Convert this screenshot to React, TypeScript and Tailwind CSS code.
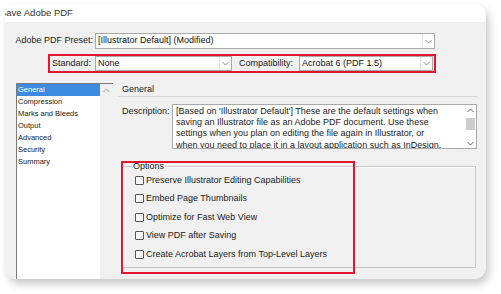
import React from "react";

const font = { fontFamily: '"Liberation Sans", Arial, sans-serif' };

function Chevron() {
  return (
    <svg width="7" height="5" viewBox="0 0 7 5">
      <polyline points="0.5,1 3.5,4 6.5,1" fill="none" stroke="#8a8a8a" strokeWidth="1" />
    </svg>
  );
}

function Select({ value, w }: { value: string; w: string }) {
  return (
    <div className={`${w} h-full flex bg-white border border-[#a9a9a9]`}>
      <div className="flex-1 flex items-center pl-[2px] text-[9px] text-[#111] whitespace-nowrap overflow-hidden">{value}</div>
      <div className="w-[12px] border-l border-[#e3e3e3] flex items-center justify-center">
        <Chevron />
      </div>
    </div>
  );
}

function Check({ label }: { label: string }) {
  return (
    <div className="h-[18.5px] flex items-center">
      <div className="w-[9px] h-[9px] border border-[#555] bg-[#f7f7f7] rounded-[1px]" />
      <span className="ml-[2px] text-[9px] text-[#1a1a1a] whitespace-nowrap">{label}</span>
    </div>
  );
}

export default function App() {
  const items = ["General", "Compression", "Marks and Bleeds", "Output", "Advanced", "Security", "Summary"];
  const desc = [
    "[Based on 'Illustrator Default'] These are the default settings when",
    "saving an Illustrator file as an Adobe PDF document. Use these",
    "settings when you plan on editing the file again in Illustrator, or",
    "when you need to place it in a layout application such as InDesign.",
  ];
  return (
    <div className="w-[501px] h-[294px] bg-white overflow-hidden pt-[4px] pl-[5px]" style={font}>
      <div className="w-[481px] h-[275px] rounded-[12px] overflow-hidden flex flex-col bg-white shadow-[3px_5px_9px_rgba(0,0,0,0.22)]">
        <div className="h-[18px] flex items-center bg-white shrink-0">
          <span className="ml-[-5px] text-[9.5px] text-[#333] whitespace-nowrap">Save Adobe PDF</span>
        </div>
        <div className="flex-1 bg-[#f0f0f0] flex flex-col">
          {/* Preset row */}
          <div className="mt-[11px] h-[16px] flex items-stretch">
            <div className="w-[90px] flex items-center justify-end pr-[2px] text-[9px] text-[#1a1a1a] whitespace-nowrap">Adobe PDF Preset:</div>
            <Select value="[Illustrator Default] (Modified)" w="w-[340px]" />
          </div>
          {/* Standard row */}
          <div className="mt-[5px] ml-[43px] w-[388px] h-[19px] border-2 border-[#e3162f] flex items-stretch">
            <div className="w-[45px] flex items-center pl-[2px] text-[9px] text-[#1a1a1a]">Standard:</div>
            <Select value="None" w="w-[137px]" />
            <div className="w-[67px] flex items-center pl-[7px] text-[9px] text-[#1a1a1a] whitespace-nowrap">Compatibility:</div>
            <Select value="Acrobat 6 (PDF 1.5)" w="w-[134px]" />
          </div>
          {/* Lower */}
          <div className="mt-[10px] flex flex-1 items-stretch">
            <div className="ml-[11px] w-[97px] flex bg-white border-l border-t border-[#7c7c7c]">
              <div className="flex-1 flex flex-col">
                {items.map((it, i) => (
                  <div
                    key={it}
                    className={`h-[12px] flex items-center pl-[1px] text-[7.5px] whitespace-nowrap ${i === 0 ? "bg-[#3c8be0] text-white" : "text-[#1a1a1a]"}`}
                  >
                    {it}
                  </div>
                ))}
              </div>
              <div className="w-[13px] bg-[#f0f0f0] flex justify-center pt-[4px]">
                <svg width="7" height="5" viewBox="0 0 7 5">
                  <polyline points="0.5,4 3.5,1 6.5,4" fill="none" stroke="#a0a0a0" strokeWidth="1" />
                </svg>
              </div>
            </div>
            <div className="ml-[5px] w-[359px] flex flex-col">
              <div className="h-[14px] border-b border-[#d6d6d6] flex items-center pl-[4px] text-[9px] text-[#1a1a1a]">General</div>
              <div className="mt-[7px] flex">
                <div className="w-[54px] pl-[4px] pt-[1px] text-[9px] text-[#1a1a1a]">Description:</div>
                <div className="w-[305px] h-[45px] bg-white border border-[#a9a9a9] flex overflow-hidden">
                  <div className="flex-1 pl-[3px] pt-[1px] text-[9px] leading-[11.2px] text-[#1a1a1a] overflow-hidden">
                    {desc.map((l) => (
                      <div key={l} className="whitespace-nowrap">{l}</div>
                    ))}
                  </div>
                  <div className="w-[11px] flex flex-col items-center bg-white">
                    <div className="h-[10px] flex items-center">
                      <svg width="7" height="5" viewBox="0 0 7 5">
                        <polyline points="0.5,4 3.5,1 6.5,4" fill="none" stroke="#606060" strokeWidth="1" />
                      </svg>
                    </div>
                    <div className="w-[9px] h-[12px] bg-[#cdcdcd] mt-[3px]" />
                    <div className="flex-1" />
                    <div className="h-[10px] flex items-center">
                      <svg width="7" height="5" viewBox="0 0 7 5">
                        <polyline points="0.5,1 3.5,4 6.5,1" fill="none" stroke="#606060" strokeWidth="1" />
                      </svg>
                    </div>
                  </div>
                </div>
              </div>
              <div className="mt-[17px] ml-[4px] w-[354px] h-[102px] relative border border-[#c9c9c9] shadow-[inset_1px_1px_0_#ffffff]">
                <div className="absolute left-[9px] top-[-6px] px-[1px] bg-[#f0f0f0] text-[9px] leading-[11px] text-[#1a1a1a]">Options</div>
                <div className="pl-[12px] pt-[4px] flex flex-col">
                  <Check label="Preserve Illustrator Editing Capabilities" />
                  <Check label="Embed Page Thumbnails" />
                  <Check label="Optimize for Fast Web View" />
                  <Check label="View PDF after Saving" />
                  <Check label="Create Acrobat Layers from Top-Level Layers" />
                </div>
                <div className="absolute left-[-2px] top-[-6px] w-[234px] h-[113px] border-2 border-[#e3162f]" />
              </div>
            </div>
          </div>
        </div>
      </div>
    </div>
  );
}
